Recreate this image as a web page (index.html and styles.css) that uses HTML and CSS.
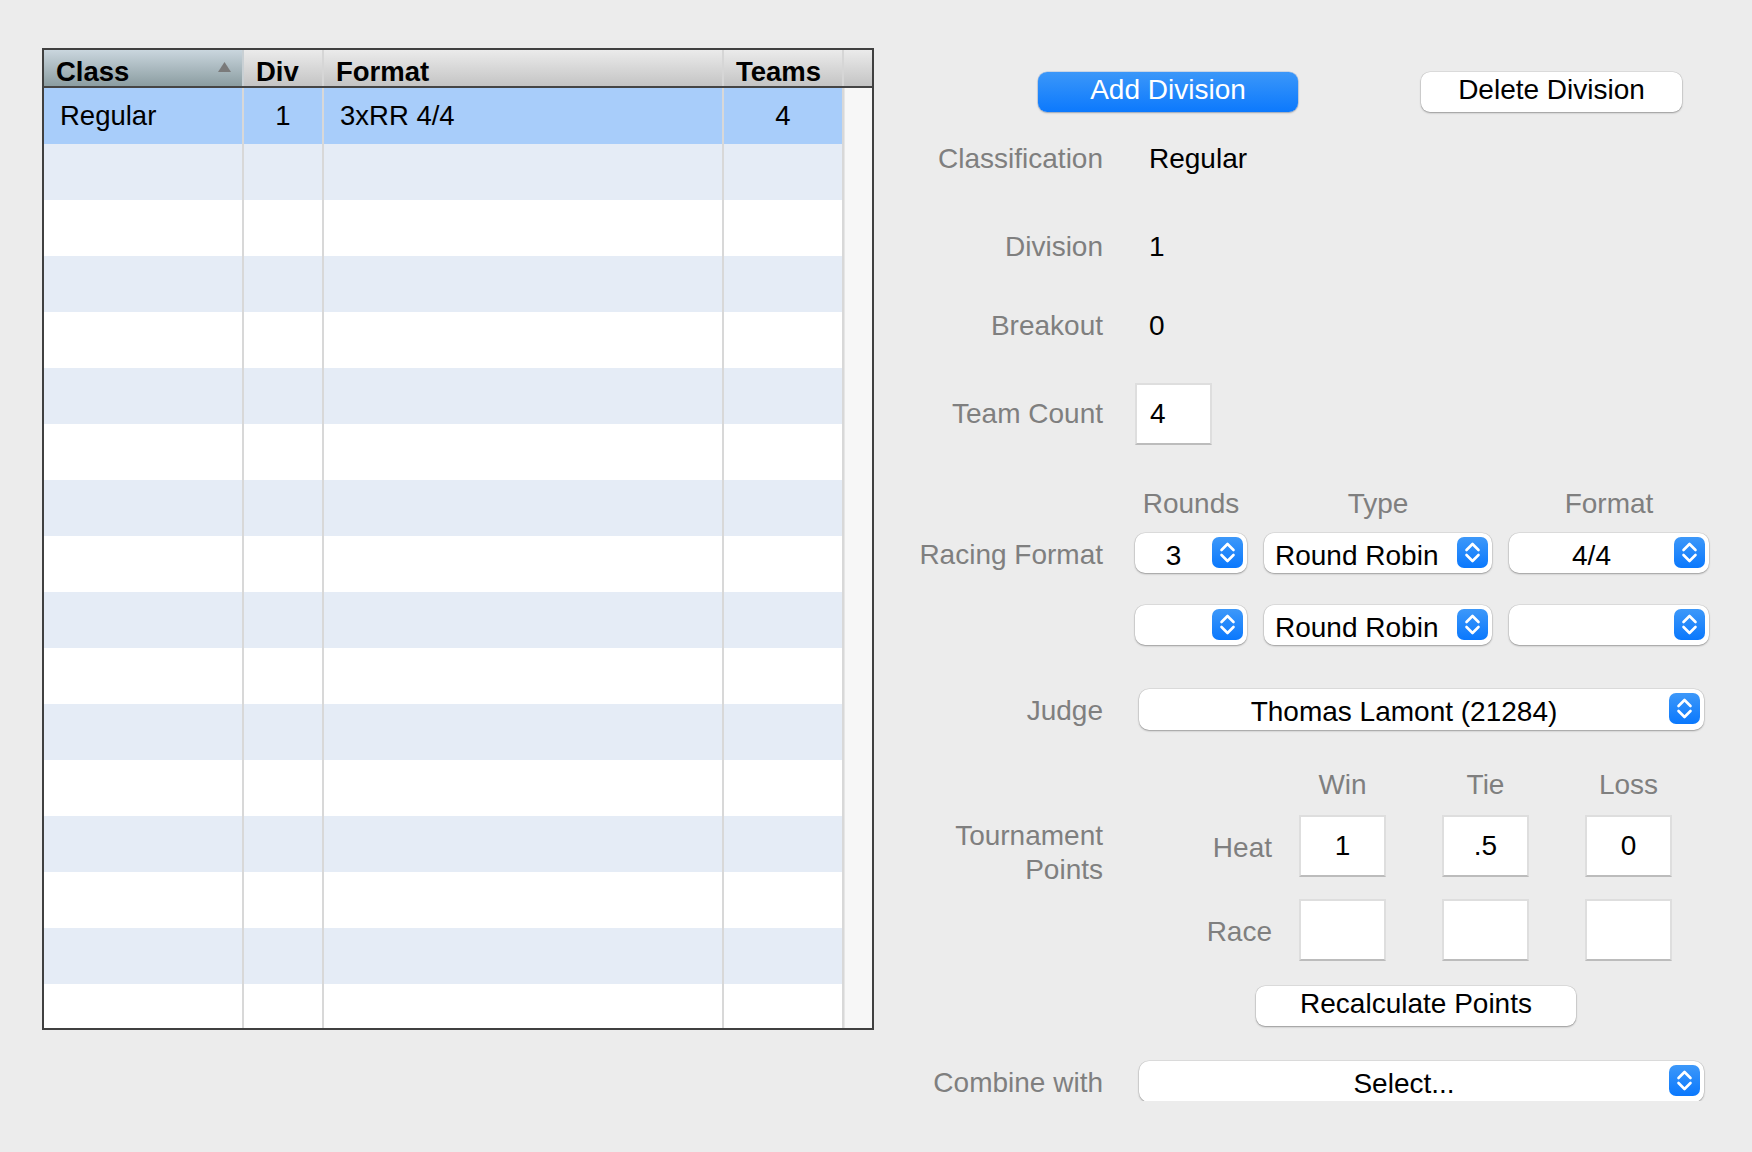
FILE: index.html
```html
<!DOCTYPE html>
<html>
<head>
<meta charset="utf-8">
<title>Divisions</title>
<link rel="stylesheet" href="styles.css">
</head>
<body>
<div class="page">
  <div class="grid-table">
    <div class="thead">
      <div class="th c-class sorted"><span>Class</span><svg class="sort" width="13" height="10" viewBox="0 0 13 10"><polygon points="0,10 6.5,0 13,10" fill="#7a7a7a"/></svg></div>
      <div class="th c-div">Div</div>
      <div class="th c-format">Format</div>
      <div class="th c-teams">Teams</div>
      <div class="th c-corner"></div>
    </div>
    <div class="tbody">
      <div class="rows">
        <div class="tr selected"><div class="td c-class">Regular</div><div class="td c-div num">1</div><div class="td c-format">3xRR 4/4</div><div class="td c-teams num">4</div></div>
        <div class="tr"><div class="td c-class"></div><div class="td c-div"></div><div class="td c-format"></div><div class="td c-teams"></div></div>
        <div class="tr"><div class="td c-class"></div><div class="td c-div"></div><div class="td c-format"></div><div class="td c-teams"></div></div>
        <div class="tr"><div class="td c-class"></div><div class="td c-div"></div><div class="td c-format"></div><div class="td c-teams"></div></div>
        <div class="tr"><div class="td c-class"></div><div class="td c-div"></div><div class="td c-format"></div><div class="td c-teams"></div></div>
        <div class="tr"><div class="td c-class"></div><div class="td c-div"></div><div class="td c-format"></div><div class="td c-teams"></div></div>
        <div class="tr"><div class="td c-class"></div><div class="td c-div"></div><div class="td c-format"></div><div class="td c-teams"></div></div>
        <div class="tr"><div class="td c-class"></div><div class="td c-div"></div><div class="td c-format"></div><div class="td c-teams"></div></div>
        <div class="tr"><div class="td c-class"></div><div class="td c-div"></div><div class="td c-format"></div><div class="td c-teams"></div></div>
        <div class="tr"><div class="td c-class"></div><div class="td c-div"></div><div class="td c-format"></div><div class="td c-teams"></div></div>
        <div class="tr"><div class="td c-class"></div><div class="td c-div"></div><div class="td c-format"></div><div class="td c-teams"></div></div>
        <div class="tr"><div class="td c-class"></div><div class="td c-div"></div><div class="td c-format"></div><div class="td c-teams"></div></div>
        <div class="tr"><div class="td c-class"></div><div class="td c-div"></div><div class="td c-format"></div><div class="td c-teams"></div></div>
        <div class="tr"><div class="td c-class"></div><div class="td c-div"></div><div class="td c-format"></div><div class="td c-teams"></div></div>
        <div class="tr"><div class="td c-class"></div><div class="td c-div"></div><div class="td c-format"></div><div class="td c-teams"></div></div>
        <div class="tr"><div class="td c-class"></div><div class="td c-div"></div><div class="td c-format"></div><div class="td c-teams"></div></div>
        <div class="tr"><div class="td c-class"></div><div class="td c-div"></div><div class="td c-format"></div><div class="td c-teams"></div></div>
      </div>
      <div class="scroll"></div>
    </div>
  </div>

  <div class="panel">
    <div class="btnrow">
      <div class="btn primary">Add Division</div>
      <div class="btn">Delete Division</div>
    </div>

    <div class="row r-class"><div class="lbl">Classification</div><div class="val">Regular</div></div>
    <div class="row r-div"><div class="lbl">Division</div><div class="val">1</div></div>
    <div class="row r-break"><div class="lbl">Breakout</div><div class="val">0</div></div>
    <div class="row r-count"><div class="lbl">Team Count</div><div class="field count">4</div></div>

    <div class="row r-fhead"><div class="lbl"></div>
      <div class="fmt"><div class="colhead">Rounds</div><div class="colhead">Type</div><div class="colhead">Format</div></div>
    </div>
    <div class="row r-fmt1"><div class="lbl">Racing Format</div>
      <div class="fmt">
        <div class="popup"><span class="pv">3</span><span class="arrow"><svg width="31" height="31" viewBox="0 0 31 31"><path d="M9.5 13 L15.5 7 L21.5 13 M9.5 18 L15.5 24 L21.5 18" fill="none" stroke="#fff" stroke-width="2.6" stroke-linecap="round" stroke-linejoin="round"/></svg></span></div>
        <div class="popup"><span class="pv left">Round Robin</span><span class="arrow"><svg width="31" height="31" viewBox="0 0 31 31"><path d="M9.5 13 L15.5 7 L21.5 13 M9.5 18 L15.5 24 L21.5 18" fill="none" stroke="#fff" stroke-width="2.6" stroke-linecap="round" stroke-linejoin="round"/></svg></span></div>
        <div class="popup"><span class="pv">4/4</span><span class="arrow"><svg width="31" height="31" viewBox="0 0 31 31"><path d="M9.5 13 L15.5 7 L21.5 13 M9.5 18 L15.5 24 L21.5 18" fill="none" stroke="#fff" stroke-width="2.6" stroke-linecap="round" stroke-linejoin="round"/></svg></span></div>
      </div>
    </div>
    <div class="row r-fmt2"><div class="lbl"></div>
      <div class="fmt">
        <div class="popup"><span class="pv"></span><span class="arrow"><svg width="31" height="31" viewBox="0 0 31 31"><path d="M9.5 13 L15.5 7 L21.5 13 M9.5 18 L15.5 24 L21.5 18" fill="none" stroke="#fff" stroke-width="2.6" stroke-linecap="round" stroke-linejoin="round"/></svg></span></div>
        <div class="popup"><span class="pv left">Round Robin</span><span class="arrow"><svg width="31" height="31" viewBox="0 0 31 31"><path d="M9.5 13 L15.5 7 L21.5 13 M9.5 18 L15.5 24 L21.5 18" fill="none" stroke="#fff" stroke-width="2.6" stroke-linecap="round" stroke-linejoin="round"/></svg></span></div>
        <div class="popup"><span class="pv"></span><span class="arrow"><svg width="31" height="31" viewBox="0 0 31 31"><path d="M9.5 13 L15.5 7 L21.5 13 M9.5 18 L15.5 24 L21.5 18" fill="none" stroke="#fff" stroke-width="2.6" stroke-linecap="round" stroke-linejoin="round"/></svg></span></div>
      </div>
    </div>

    <div class="row r-judge"><div class="lbl">Judge</div>
      <div class="popup wide"><span class="pv">Thomas Lamont (21284)</span><span class="arrow"><svg width="31" height="31" viewBox="0 0 31 31"><path d="M9.5 13 L15.5 7 L21.5 13 M9.5 18 L15.5 24 L21.5 18" fill="none" stroke="#fff" stroke-width="2.6" stroke-linecap="round" stroke-linejoin="round"/></svg></span></div>
    </div>

    <div class="row r-wtl"><div class="lbl"></div>
      <div class="pts"><div class="slbl"></div><div class="colhead pcol">Win</div><div class="colhead pcol">Tie</div><div class="colhead pcol">Loss</div></div>
    </div>
    <div class="row r-heat"><div class="lbl two">Tournament<br>Points</div>
      <div class="pts"><div class="slbl">Heat</div><div class="field pt">1</div><div class="field pt">.5</div><div class="field pt">0</div></div>
    </div>
    <div class="row r-race"><div class="lbl"></div>
      <div class="pts"><div class="slbl">Race</div><div class="field pt"></div><div class="field pt"></div><div class="field pt"></div></div>
    </div>
    <div class="row r-recalc"><div class="lbl"></div><div class="btn recalc">Recalculate Points</div></div>

    <div class="row r-combine"><div class="lbl">Combine with</div>
      <div class="popup wide"><span class="pv">Select...</span><span class="arrow"><svg width="31" height="31" viewBox="0 0 31 31"><path d="M9.5 13 L15.5 7 L21.5 13 M9.5 18 L15.5 24 L21.5 18" fill="none" stroke="#fff" stroke-width="2.6" stroke-linecap="round" stroke-linejoin="round"/></svg></span></div>
    </div>
  </div>
</div>
</body>
</html>
```

FILE: styles.css
```css
* { box-sizing: border-box; }

body {
  margin: 0;
  background: #ececec;
  font-family: "Liberation Sans", Arial, sans-serif;
  color: #000;
}

.page {
  display: flex;
  align-items: flex-start;
  padding: 48px 0 0 42px;
}

/* ---------- table ---------- */
.grid-table {
  width: 832px;
  height: 982px;
  border: 2px solid #404040;
  background: #fff;
  display: flex;
  flex-direction: column;
  overflow: hidden;
  flex: none;
}

.thead {
  display: flex;
  height: 38px;
  border-bottom: 2px solid #454545;
  flex: none;
}

.th {
  height: 36px;
  display: flex;
  align-items: flex-start;
  padding: 8px 0 0 12px;
  font-size: 27.5px;
  line-height: 28px;
  font-weight: bold;
  background: linear-gradient(#ebebeb, #c4c4c4);
  border-right: 2px solid #d6d6d6;
  white-space: nowrap;
}

.th.sorted {
  background: linear-gradient(#cad6de, #8b9da1);
  border-right-color: #c9d0d4;
}

.sort {
  margin: 4px 11px 0 auto;
  flex: none;
}

.c-class { width: 200px; }
.c-div { width: 80px; }
.c-format { width: 400px; }
.c-teams { width: 120px; }
.c-corner { width: 28px; border-right: 0; padding: 0; }

.tbody {
  display: flex;
  flex: 1;
  min-height: 0;
}

.rows {
  width: 800px;
  overflow: hidden;
}

.tr {
  display: flex;
  height: 56px;
  background: #fff;
}

.tr:nth-child(even) { background: #e5ecf6; }
.tr.selected { background: #a8cdfa; }

.td {
  height: 56px;
  border-right: 2px solid #d8d8d8;
  padding-left: 16px;
  font-size: 27.5px;
  line-height: 56px;
  white-space: nowrap;
}

.td.num {
  padding-left: 0;
  text-align: center;
}

.scroll {
  width: 28px;
  background: #f7f7f7;
  border-left: 1px solid #e6e6e6;
}

/* ---------- panel ---------- */
.panel {
  margin-left: 26px;
  width: 820px;
  display: flex;
  flex-direction: column;
  font-size: 28px;
}

.btnrow {
  margin-top: 24px;
  height: 40px;
  display: flex;
  padding-left: 138px;
  gap: 123px;
}

.btn {
  height: 40px;
  width: 261px;
  border-radius: 9px;
  background: #fff;
  text-align: center;
  line-height: 36px;
  box-shadow: 0 0 0 0.5px rgba(0, 0, 0, 0.12), 0 1px 2px rgba(0, 0, 0, 0.32);
  white-space: nowrap;
}

.btn.primary {
  width: 260px;
  color: #fff;
  background: linear-gradient(#3b97f9, #0c79fd);
  box-shadow: 0 0 0 0.5px rgba(0, 80, 200, 0.25), 0 1px 2px rgba(0, 0, 0, 0.25);
}

.btn.recalc {
  width: 320px;
  margin-left: 121px;
}

.row {
  display: flex;
  align-items: center;
  gap: 32px;
}

.lbl {
  width: 203px;
  flex: none;
  text-align: right;
  color: #7f7f7f;
  white-space: nowrap;
}

.lbl.two {
  align-self: flex-start;
  padding-top: 4px;
  line-height: 34px;
}

.val {
  padding-left: 14px;
}

.r-class, .r-div, .r-break { height: 40px; line-height: 40px; }
.r-class { margin-top: 27px; }
.r-div { margin-top: 48px; }
.r-break { margin-top: 39px; }
.r-count { margin-top: 37px; height: 62px; }
.r-fhead { margin-top: 44px; height: 30px; line-height: 30px; }
.r-fmt1 { margin-top: 14px; height: 40px; }
.r-fmt2 { margin-top: 32px; height: 40px; }
.r-judge { margin-top: 44px; height: 41px; }
.r-wtl { margin-top: 40px; height: 30px; line-height: 32px; }
.r-heat { margin-top: 15px; height: 62px; }
.r-race { margin-top: 22px; height: 62px; }
.r-recalc { margin-top: 25px; height: 40px; }
.r-combine { margin-top: 35px; height: 40px; }

.r-fmt1 .lbl,
.r-judge .lbl,
.r-combine .lbl { padding-top: 3px; }

.colhead {
  color: #7f7f7f;
  text-align: center;
  white-space: nowrap;
}

.field {
  background: #fff;
  border: 2px solid #dedede;
  border-bottom-color: #bcbcbc;
  height: 62px;
  line-height: 58px;
}

.field.count {
  width: 77px;
  padding-left: 13px;
}

.fmt {
  display: grid;
  grid-template-columns: 112px 228px 200px;
  column-gap: 17px;
}

.popup {
  height: 40px;
  background: #fff;
  border-radius: 10px;
  display: flex;
  align-items: flex-start;
  box-shadow: 0 0 0 0.5px rgba(0, 0, 0, 0.12), 0 1px 2px rgba(0, 0, 0, 0.3);
}

.popup.wide {
  width: 565px;
  height: 41px;
  margin-left: 4px;
}

.pv {
  flex: 1;
  height: 40px;
  line-height: 46px;
  text-align: center;
  white-space: nowrap;
  overflow: visible;
}

.pv.left {
  text-align: left;
  padding-left: 11px;
}

.arrow {
  flex: none;
  width: 31px;
  height: 31px;
  margin: 4px 4px 0 0;
  border-radius: 7px;
  background: linear-gradient(#3d98f9, #0a78fd);
}

.arrow svg { display: block; }

.pts {
  display: flex;
  align-items: center;
  gap: 56px;
}

.slbl {
  width: 137px;
  margin-right: -29px;
  padding-top: 4px;
  text-align: right;
  color: #7f7f7f;
}

.pcol { width: 87px; }

.field.pt {
  width: 87px;
  text-align: center;
}
```
